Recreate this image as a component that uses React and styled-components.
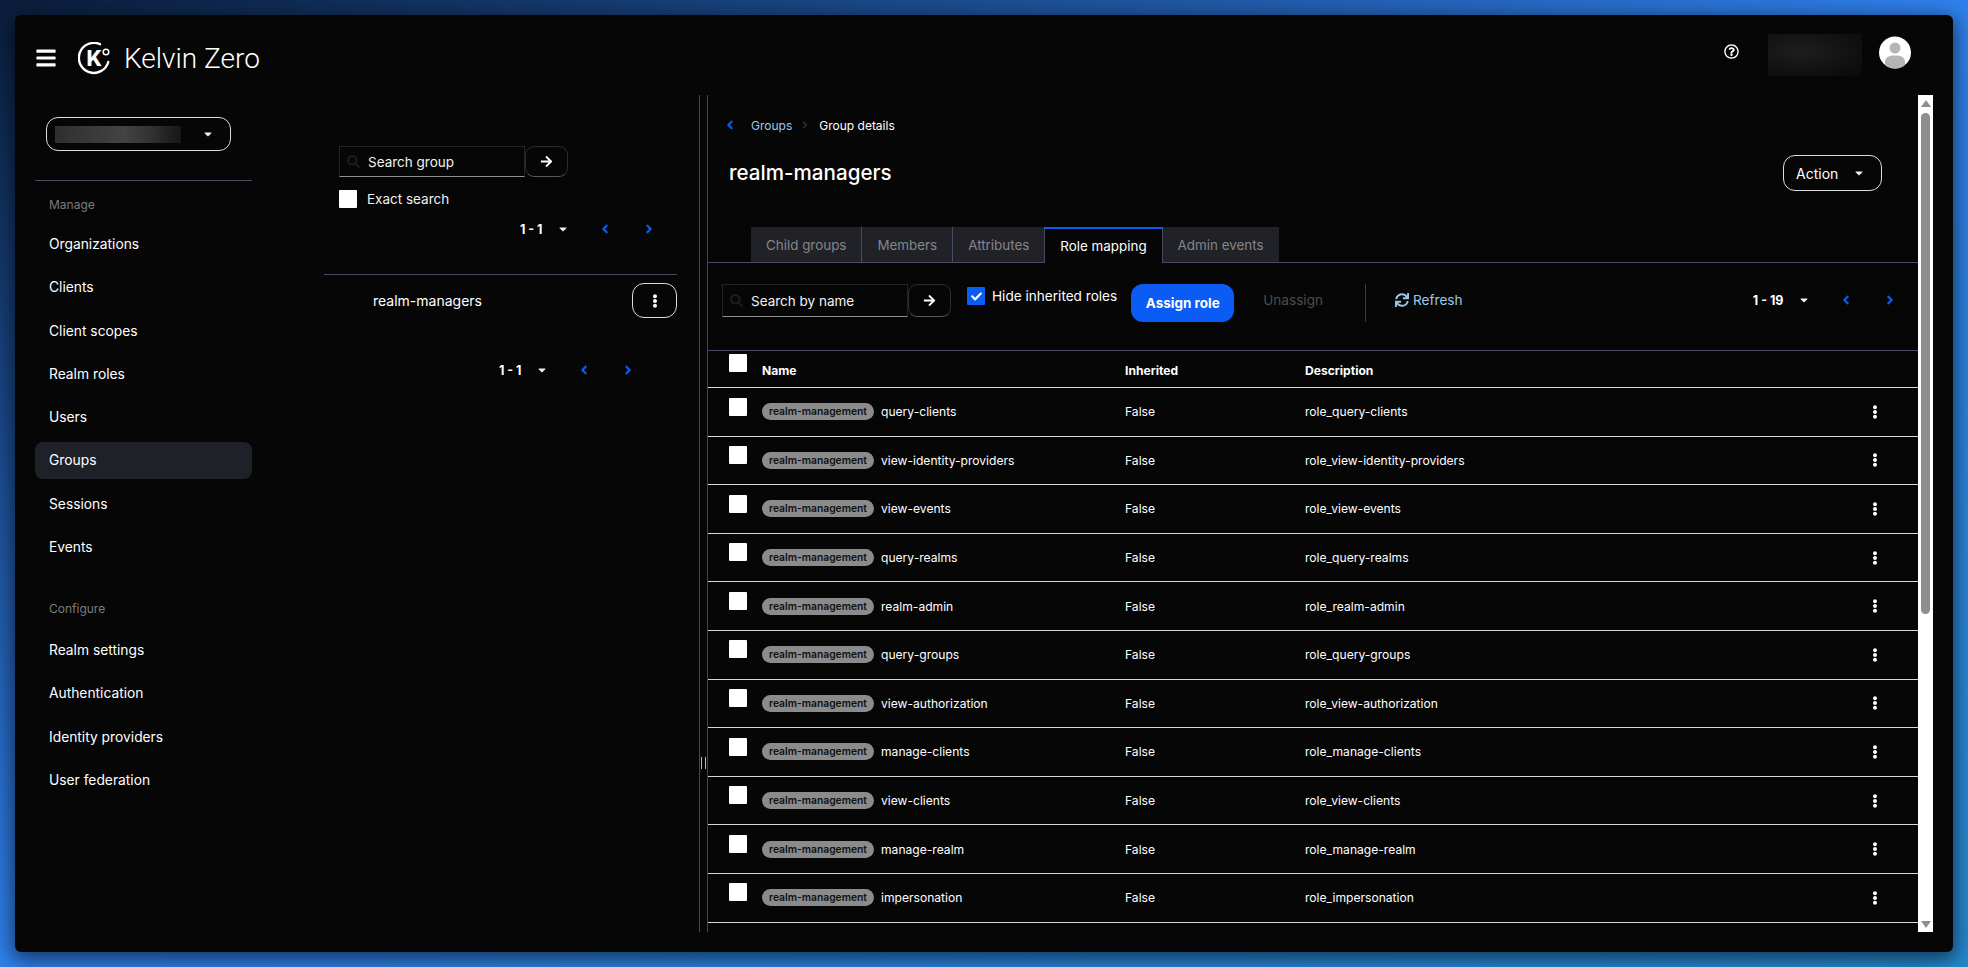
import React from "react";
import styled, { createGlobalStyle } from "styled-components";
import { FaArrowRight, FaSync, FaAngleLeft, FaAngleRight, FaEllipsisV, FaCaretDown, FaRegQuestionCircle, FaSearch, FaCheck, FaBars } from "react-icons/fa";

const Global = createGlobalStyle`
  html, body { margin: 0; height: 100%; background: #0c2a55; overflow: hidden; }
  #root { height: 100%; }
  * { box-sizing: border-box; }
`;
const Desktop = styled.div`
  height: 967px; width: 1968px; padding: 15px;
  background: linear-gradient(to bottom right, #0a1d3b 0%, #2f80ec 50%, #2488cc 100%);
  font-family: "Inter", "Noto Sans", sans-serif;
  color: #fff;
`;
const Panel = styled.div`
  height: 937px; background: #060607; border-radius: 6px;
  box-shadow: 0 5px 20px 2px rgba(0,0,0,.6);
  display: flex; flex-direction: column; overflow: hidden;
`;
const Header = styled.header`
  height: 80px; flex: none; display: flex; align-items: center; padding: 0 42px 6px 21px;
`;
const BrandGroup = styled.div` display: flex; align-items: center; padding-top: 12px; `;
const Burger = styled(FaBars)` width: 20px; height: 22px; color: #fff; margin-right: 22px; `;
const Brand = styled.div`
  font-family: "Roboto", sans-serif; font-weight: 300; font-size: 28px; margin-left: 14px;
`;
const HeaderRight = styled.div` margin-left: auto; display: flex; align-items: center; `;
const HelpIcon = styled(FaRegQuestionCircle)` width: 15px; height: 15px; margin-bottom: 2px; `;
const BlurName = styled.div`
  width: 94px; height: 42px; margin: 6px 17px 0 29px;
  background: radial-gradient(ellipse at 35% 40%, #1e1e1e 0%, #131313 50%, #090909 100%);
`;
const Avatar = styled.svg` width: 32px; height: 33px; `;
const Body = styled.div` flex: 1; min-height: 0; display: flex; padding-bottom: 20px; padding-right: 20px; `;
const Sidebar = styled.nav` width: 237px; flex: none; padding: 22px 0 0 20px; `;
const RealmSelect = styled.div`
  width: 185px; height: 34px; margin-left: 11px; margin-bottom: 29px; border: 1px solid #ddd; border-radius: 12px;
  display: flex; align-items: center; padding-left: 8px;
`;
const RealmBlur = styled.div`
  width: 126px; height: 17px;
  background: linear-gradient(90deg, #2f2f2f 0%, #3a3a3a 30%, #434343 55%, #333 75%, #161616 100%);
`;
const SmallCaret = styled(FaCaretDown)` width: 10px; height: 12px; color: #eee; flex: none; `;
const RealmCaret = styled(SmallCaret)` margin-left: 22px; `;
const SideRule = styled.div` height: 1px; background: #4a4b60; `;
const NavLabel = styled.div`
  font-size: 12px; line-height: 16px; color: #7c7c7c; padding-left: 14px;
  margin-top: ${p => p.$top}px; margin-bottom: ${p => p.$bottom}px;
`;
const NavList = styled.div` display: flex; flex-direction: column; gap: ${p => p.$gap}px; `;
const NavItem = styled.a`
  height: 37px; display: flex; align-items: center; padding-left: 14px; border-radius: 8px;
  font-size: 13.8px; color: #fff; background: ${p => p.$active ? "#1f2129" : "transparent"};
`;
const TreeColumn = styled.section` width: 353px; flex: none; margin-left: 72px; margin-right: 22px; padding-top: 51px; `;
const Inset = styled.div` padding-left: 15px; `;
const SearchRow = styled.div` display: flex; height: 31px; `;
const SearchInput = styled.div`
  width: 186px; height: 100%; display: flex; align-items: center; padding-left: 7px;
  border: 1px solid #222327; border-bottom-color: #8f8f8f;
  font-size: 13.5px; color: #f2f2f2;
`;
const SearchGlyph = styled(FaSearch)` width: 13px; height: 13px; color: #1d1d1f; margin-right: 8px; `;
const ArrowButton = styled.button`
  width: 43px; height: 100%; background: transparent; border: 1px solid #2d2d30; border-bottom-color: #5a5a5a;
  border-radius: 9px; color: #fff; display: flex; align-items: center; justify-content: center; padding: 0;
`;
const ArrowGlyph = styled(FaArrowRight)` width: 13px; height: 13px; `;
const Check = styled.span`
  width: 18px; height: 18px; flex: none; display: flex; align-items: center; justify-content: center;
  border-radius: 1px; background: ${p => p.$on ? "#0a5cf5" : "#fff"}; color: #fff;
`;
const CheckRow = styled.div` display: flex; align-items: center; gap: 10px; margin-top: 13px; font-size: 13.5px; color: #f0f0f0; `;
const Pager = styled.div`
  display: flex; align-items: center; height: 20px; justify-content: flex-end;
  margin-top: ${p => p.$top || 0}px; padding-right: ${p => p.$right}px;
`;
const PagerText = styled.span` font-size: 12.5px; font-weight: 700; margin-right: 15px; `;
const PagerCaret = styled(SmallCaret)` margin-right: 30px; `;
const PagerChevron = styled.span` color: #0a5cf5; display: flex; `;
const ChevronGap = styled.span` width: 30.5px; `;
const TreeRule = styled.div` height: 1px; background: #4a4b60; margin-top: 35px; `;
const TreeRow = styled.div` display: flex; align-items: center; justify-content: space-between; margin-top: 8px; padding-left: 49px; font-size: 14px; `;
const KebabButton = styled.button`
  width: 45px; height: 35px; border: 1px solid #ddd; border-radius: 12px; background: transparent; color: #fff;
  display: flex; align-items: center; justify-content: center; padding: 0;
`;
const Splitter = styled.div`
  width: 9px; flex: none; border-left: 1px solid #45464f; border-right: 1px solid #45464f;
  display: flex; align-items: flex-start; justify-content: center; padding-top: 662px;
`;
const Grip = styled.div` width: 5px; height: 12px; border-left: 1px solid #bbb; border-right: 1px solid #bbb; `;
const Main = styled.main` flex: 1; min-width: 0; overflow: hidden; `;
const ScrollBar = styled.div`
  width: 15px; flex: none; background: #fff; display: flex; flex-direction: column; align-items: center; padding: 5px 0 4px;
`;
const ScrollUp = styled.div`
  width: 0; height: 0; border-left: 5px solid transparent; border-right: 5px solid transparent; border-bottom: 7px solid #8e8e8e; margin-bottom: 6px;
`;
const ScrollThumb = styled.div` width: 9px; height: 501px; border-radius: 5px; background: #8e8e8e; `;
const ScrollDown = styled.div`
  width: 0; height: 0; margin-top: auto; border-left: 5px solid transparent; border-right: 5px solid transparent; border-top: 7px solid #8e8e8e;
`;
const Breadcrumb = styled.div` height: 60px; display: flex; align-items: center; padding-left: 16px; font-size: 12px; `;
const CrumbBack = styled(FaAngleLeft)` color: #0a5cf5; width: 12px; height: 14px; margin-right: 15px; `;
const CrumbLink = styled.a` color: #9cc9e8; `;
const CrumbSep = styled(FaAngleRight)` width: 8px; height: 12px; color: #2a2a2c; margin: 0 10px 0 9px; `;
const TitleRow = styled.div` height: 36px; display: flex; align-items: center; justify-content: space-between; padding: 0 36px 0 21px; margin-bottom: 36px; `;
const Title = styled.h1` margin: 0 0 2px; font-size: 20.6px; font-weight: 500; `;
const ActionButton = styled.button`
  width: 99px; height: 36px; border: 1px solid #ddd; border-radius: 12px; background: transparent; color: #fff;
  font: 400 14px "Inter", sans-serif; display: flex; align-items: center; padding: 0 0 0 12px; gap: 16px;
`;
const Tabs = styled.div` height: 36px; display: flex; padding-left: 43px; border-bottom: 1px solid #4a4b60; `;
const Tab = styled.div`
  height: ${p => p.$active ? 36 : 35}px; padding: 0 15px; display: flex; align-items: center; font-size: 13.4px;
  background: ${p => p.$active ? "#060607" : "#212228"};
  color: ${p => p.$active ? "#fff" : "#85858a"};
  border-right: 1px solid #4a4b60;
  border-top: ${p => p.$active ? "2px solid #0a5cf5" : "none"};
  ${p => p.$active && "border-left: 1px solid #4a4b60; margin-left: -1px;"}
  ${p => p.$last && "border-right: none;"}
`;
const Toolbar = styled.div` height: 87px; display: flex; align-items: flex-start; padding: 21px 0 0 14px; `;
const ToolSearch = styled(SearchRow)` height: 33px; margin-right: 16px; `;
const HideLabel = styled.label` display: flex; align-items: center; gap: 7px; font-size: 13.6px; margin-top: 3px; margin-right: 14px; `;
const AssignButton = styled.button`
  width: 103px; height: 38px; border: none; border-radius: 12px; background: #0a5cf5; color: #fff;
  font: 700 13.5px "Inter", sans-serif; padding: 0;
`;
const ToolText = styled.span` font-size: 13.6px; line-height: 32px; color: ${p => p.$c}; `;
const Unassign = styled(ToolText)` margin-left: 29px; margin-right: 42px; `;
const ToolRule = styled.div` width: 1px; height: 38px; background: #3a3b45; margin-right: 29px; `;
const RefreshIcon = styled(FaSync)` width: 14px; height: 14px; color: #9cc9e8; margin-right: 4px; margin-top: 9px; `;
const ToolPagerSlot = styled.div` margin-left: auto; margin-top: 6px; `;
const Head = styled.div`
  height: 38px; display: grid; grid-template-columns: 33px 363px 180px 1fr; padding-left: 21px;
  border-top: 1px solid #4a4b60; border-bottom: 1px solid #d8d8d8;
`;
const HeadCell = styled.div` font-size: 12.1px; font-weight: 700; margin-top: 12px; `;
const Row = styled.div`
  height: 48.6px; display: grid; grid-template-columns: 33px 363px 180px 1fr 50px; padding-left: 21px; padding-right: 18px;
  align-items: center; border-bottom: 1px solid #d8d8d8;
  font-size: 12.1px;
`;
const CheckCell = styled.div` align-self: start; margin-top: ${p => p.$top}px; `;
const NameCell = styled.div` display: flex; align-items: center; `;
const Badge = styled.span`
  background: #8b8b8b; color: #111; font-size: 10.3px; font-weight: 600; border-radius: 9px; height: 17px; line-height: 17px;
  margin-right: 7px; width: 112px; text-align: center; white-space: nowrap;
`;
const RowKebab = styled.div` display: flex; justify-content: flex-end; padding-right: 19px; `;
const KebabGlyph = styled(FaEllipsisV)` width: 12px; height: 14px; `;

const manage = ["Organizations", "Clients", "Client scopes", "Realm roles", "Users", "Groups", "Sessions", "Events"];
const configure = ["Realm settings", "Authentication", "Identity providers", "User federation"];
const roles = ["query-clients","view-identity-providers","view-events","query-realms","realm-admin","query-groups","view-authorization","manage-clients","view-clients","manage-realm","impersonation"];

const Logo = () => (
  <svg width="32" height="33" viewBox="0 0 32 33" aria-hidden="true">
    <path d="M22 2.2 A15 15 0 1 0 30.3 20" fill="none" stroke="#fff" strokeWidth="2.4" strokeLinecap="round" />
    <circle cx="28" cy="10" r="2.8" fill="none" stroke="#fff" strokeWidth="1.5" />
    <text x="8.5" y="23.5" fill="#fff" fontFamily="Inter, sans-serif" fontWeight="800" fontSize="21">K</text>
  </svg>
);
const Pagination = ({ label, top, right }) => (
  <Pager $top={top} $right={right}>
    <PagerText>{label}</PagerText>
    <PagerCaret />
    <PagerChevron><FaAngleLeft size={14} /></PagerChevron>
    <ChevronGap />
    <PagerChevron><FaAngleRight size={14} /></PagerChevron>
  </Pager>
);

export default function App() {
  return (
    <Desktop>
      <Global />
      <Panel>
        <Header>
          <BrandGroup>
            <Burger />
            <Logo />
            <Brand>Kelvin Zero</Brand>
          </BrandGroup>
          <HeaderRight>
            <HelpIcon />
            <BlurName />
            <Avatar viewBox="0 0 32 33" aria-hidden="true">
              <defs><clipPath id="av"><circle cx="16" cy="16.5" r="16" /></clipPath></defs>
              <g clipPath="url(#av)">
                <rect width="32" height="33" fill="#fff" />
                <circle cx="16" cy="12" r="5.5" fill="#b5b5b5" />
                <path d="M6 33 V26 C6 21 10 19.5 16 19.5 C22 19.5 26 21 26 26 V33 Z" fill="#b5b5b5" />
              </g>
            </Avatar>
          </HeaderRight>
        </Header>
        <Body>
          <Sidebar>
            <RealmSelect><RealmBlur /><RealmCaret /></RealmSelect>
            <SideRule />
            <NavLabel $top={16} $bottom={12.5}>Manage</NavLabel>
            <NavList $gap={6.25}>{manage.map(m => <NavItem key={m} $active={m === "Groups"}>{m}</NavItem>)}</NavList>
            <NavLabel $top={35.5} $bottom={14.5}>Configure</NavLabel>
            <NavList $gap={6.5}>{configure.map(m => <NavItem key={m}>{m}</NavItem>)}</NavList>
          </Sidebar>
          <TreeColumn>
            <Inset>
              <SearchRow>
                <SearchInput><SearchGlyph />Search group</SearchInput>
                <ArrowButton><ArrowGlyph /></ArrowButton>
              </SearchRow>
              <CheckRow><Check />Exact search</CheckRow>
            </Inset>
            <Pagination label="1 - 1" top={11} right={21} />
            <TreeRule />
            <TreeRow>realm-managers<KebabButton><KebabGlyph /></KebabButton></TreeRow>
            <Pagination label="1 - 1" top={42} right={42} />
          </TreeColumn>
          <Splitter><Grip /></Splitter>
          <Main>
            <Breadcrumb><CrumbBack /><CrumbLink>Groups</CrumbLink><CrumbSep />Group details</Breadcrumb>
            <TitleRow>
              <Title>realm-managers</Title>
              <ActionButton>Action<SmallCaret /></ActionButton>
            </TitleRow>
            <Tabs>
              <Tab>Child groups</Tab><Tab>Members</Tab><Tab>Attributes</Tab><Tab $active>Role mapping</Tab><Tab $last>Admin events</Tab>
            </Tabs>
            <Toolbar>
              <ToolSearch>
                <SearchInput><SearchGlyph />Search by name</SearchInput>
                <ArrowButton><ArrowGlyph /></ArrowButton>
              </ToolSearch>
              <HideLabel><Check $on><FaCheck size={11} /></Check>Hide inherited roles</HideLabel>
              <AssignButton>Assign role</AssignButton>
              <Unassign $c="#4d4d50">Unassign</Unassign>
              <ToolRule />
              <RefreshIcon /><ToolText $c="#9cc9e8">Refresh</ToolText>
              <ToolPagerSlot><Pagination label="1 - 19" right={21} /></ToolPagerSlot>
            </Toolbar>
            <Head>
              <CheckCell $top={3}><Check /></CheckCell>
              <HeadCell>Name</HeadCell><HeadCell>Inherited</HeadCell><HeadCell>Description</HeadCell>
            </Head>
            {roles.map(r => (
              <Row key={r}>
                <CheckCell $top={9.5}><Check /></CheckCell>
                <NameCell><Badge>realm-management</Badge>{r}</NameCell>
                <div>False</div>
                <div>role_{r}</div>
                <RowKebab><KebabGlyph /></RowKebab>
              </Row>
            ))}
          </Main>
          <ScrollBar><ScrollUp /><ScrollThumb /><ScrollDown /></ScrollBar>
        </Body>
      </Panel>
    </Desktop>
  );
}
